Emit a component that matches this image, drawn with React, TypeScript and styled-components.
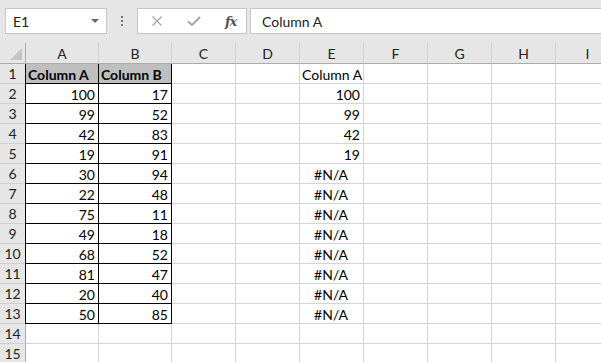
import React from "react";
import styled, { createGlobalStyle } from "styled-components";

const GlobalStyle = createGlobalStyle`
  html, body {
    margin: 0;
    padding: 0;
    background: #ffffff;
    overflow: hidden;
  }
  body {
    font-family: "Lato", "Liberation Sans", sans-serif;
  }
`;

const COLS = ["A", "B", "C", "D", "E", "F", "G", "H", "I"];
const COL_WIDTHS = [73, 73, 64, 64, 64, 64, 64, 64, 64];

type Align = "left" | "right" | "center";
interface CellData {
  text: string;
  align?: Align;
  bold?: boolean;
  fill?: boolean;
}

const colA = [100, 99, 42, 19, 30, 22, 75, 49, 68, 81, 20, 50];
const colB = [17, 52, 83, 91, 94, 48, 11, 18, 52, 47, 40, 85];
const colE = ["100", "99", "42", "19"];

const buildRows = (): Record<string, CellData>[] => {
  const rows: Record<string, CellData>[] = [];
  rows.push({
    A: { text: "Column A", bold: true, fill: true, align: "left" },
    B: { text: "Column B", bold: true, fill: true, align: "left" },
    E: { text: "Column A", align: "left" },
  });
  for (let i = 0; i < 12; i++) {
    rows.push({
      A: { text: String(colA[i]), align: "right" },
      B: { text: String(colB[i]), align: "right" },
      E: colE[i]
        ? { text: colE[i], align: "right" }
        : { text: "#N/A", align: "center" },
    });
  }
  rows.push({});
  rows.push({});
  return rows;
};

const Toolbar = styled.div`
  height: 43px;
  background: #e6e6e6;
  display: flex;
  align-items: flex-start;
  padding-top: 8px;
  box-sizing: border-box;
`;

const NameBox = styled.div`
  margin-left: 5px;
  width: 102px;
  height: 26px;
  box-sizing: border-box;
  background: #fff;
  border: 1px solid #c6c6c6;
  display: flex;
  align-items: center;
  justify-content: space-between;
  padding: 0 7px 0 7px;
  font-size: 14px;
  color: #222;
`;

const DropArrow = styled.span`
  width: 0;
  height: 0;
  border-left: 4px solid transparent;
  border-right: 4px solid transparent;
  border-top: 4px solid #6a6a6a;
`;

const Dots = styled.div`
  width: 30px;
  height: 26px;
  display: flex;
  flex-direction: column;
  align-items: center;
  justify-content: center;
  gap: 2px;
  span {
    width: 2px;
    height: 2px;
    background: #737373;
  }
`;

const FormulaButtons = styled.div`
  width: 110px;
  height: 26px;
  box-sizing: border-box;
  background: #fff;
  border: 1px solid #c6c6c6;
  display: flex;
  align-items: center;
  padding-left: 13px;
  gap: 24px;
`;

const Fx = styled.span`
  font-family: "DejaVu Serif", "Liberation Serif", serif;
  font-style: italic;
  font-size: 13px;
  font-weight: bold;
  color: #555;
  letter-spacing: -1px;
`;

const FormulaInput = styled.div`
  margin-left: 3px;
  flex: 1;
  height: 26px;
  box-sizing: border-box;
  background: #fff;
  border: 1px solid #c6c6c6;
  border-right: none;
  display: flex;
  align-items: center;
  padding-left: 11px;
  font-size: 14px;
  color: #222;
`;

const Sheet = styled.div`
  display: grid;
  grid-template-columns: 26px ${COL_WIDTHS.map((w) => `${w}px`).join(" ")};
  grid-auto-rows: 20px;
  grid-template-rows: 21px;
  font-size: 14px;
  width: max-content;
`;

const Corner = styled.div`
  background: #e6e6e6;
  border-right: 1px solid #ababab;
  border-bottom: 1px solid #ababab;
  box-sizing: border-box;
  position: relative;
  &::after {
    content: "";
    position: absolute;
    right: 3px;
    bottom: 3px;
    width: 0;
    height: 0;
    border-left: 12px solid transparent;
    border-bottom: 12px solid #c4c4c4;
  }
`;

const ColHeader = styled.div`
  background: #e6e6e6;
  box-sizing: border-box;
  border-bottom: 1px solid #ababab;
  border-right: 1px solid #d0d0d0;
  display: flex;
  align-items: center;
  justify-content: center;
  color: #222;
  padding-top: 1px;
`;

const RowHeader = styled.div`
  background: #e6e6e6;
  box-sizing: border-box;
  border-right: 1px solid #ababab;
  border-bottom: 1px solid #d0d0d0;
  display: flex;
  align-items: center;
  justify-content: center;
  color: #222;
`;

const Cell = styled.div<{
  $align: Align;
  $bold?: boolean;
  $fill?: boolean;
  $table?: boolean;
  $first?: boolean;
}>`
  box-sizing: border-box;
  border-right: 1px solid ${(p) => (p.$table ? "#000" : "#d4d4d4")};
  border-bottom: 1px solid ${(p) => (p.$table ? "#000" : "#d4d4d4")};
  background: ${(p) => (p.$fill ? "#bfbfbf" : "#fff")};
  font-weight: ${(p) => (p.$bold ? 700 : 400)};
  color: #000;
  display: flex;
  align-items: center;
  justify-content: ${(p) =>
    p.$align === "right"
      ? "flex-end"
      : p.$align === "center"
      ? "center"
      : "flex-start"};
  padding: 1px 3px 0 2px;
  white-space: nowrap;
  overflow: visible;
  box-shadow: ${(p) => (p.$first ? "-1px 0 0 #000" : "none")};
`;

const XIcon = () => (
  <svg width="12" height="12" viewBox="0 0 12 12">
    <path d="M1.5 1.5 L10.5 10.5 M10.5 1.5 L1.5 10.5" stroke="#a6a6a6" strokeWidth="1.3" fill="none" />
  </svg>
);

const CheckIcon = () => (
  <svg width="14" height="12" viewBox="0 0 14 12">
    <path d="M1 6.5 L5 10 L13 2" stroke="#a6a6a6" strokeWidth="2" fill="none" />
  </svg>
);

export default function App() {
  const rows = buildRows();
  return (
    <>
      <GlobalStyle />
      <Toolbar>
        <NameBox>
          E1
          <DropArrow />
        </NameBox>
        <Dots>
          <span />
          <span />
          <span />
        </Dots>
        <FormulaButtons>
          <XIcon />
          <CheckIcon />
          <Fx>fx</Fx>
        </FormulaButtons>
        <FormulaInput>Column A</FormulaInput>
      </Toolbar>
      <Sheet>
        <Corner />
        {COLS.map((c) => (
          <ColHeader key={c}>{c}</ColHeader>
        ))}
        {rows.map((row, r) => (
          <React.Fragment key={r}>
            <RowHeader>{r + 1}</RowHeader>
            {COLS.map((c) => {
              const d = row[c];
              const table = r < 13 && (c === "A" || c === "B");
              return (
                <Cell
                  key={c}
                  $align={d?.align ?? "left"}
                  $bold={d?.bold}
                  $fill={d?.fill}
                  $table={table}
                  $first={table && c === "A"}
                >
                  {d?.text}
                </Cell>
              );
            })}
          </React.Fragment>
        ))}
      </Sheet>
    </>
  );
}
